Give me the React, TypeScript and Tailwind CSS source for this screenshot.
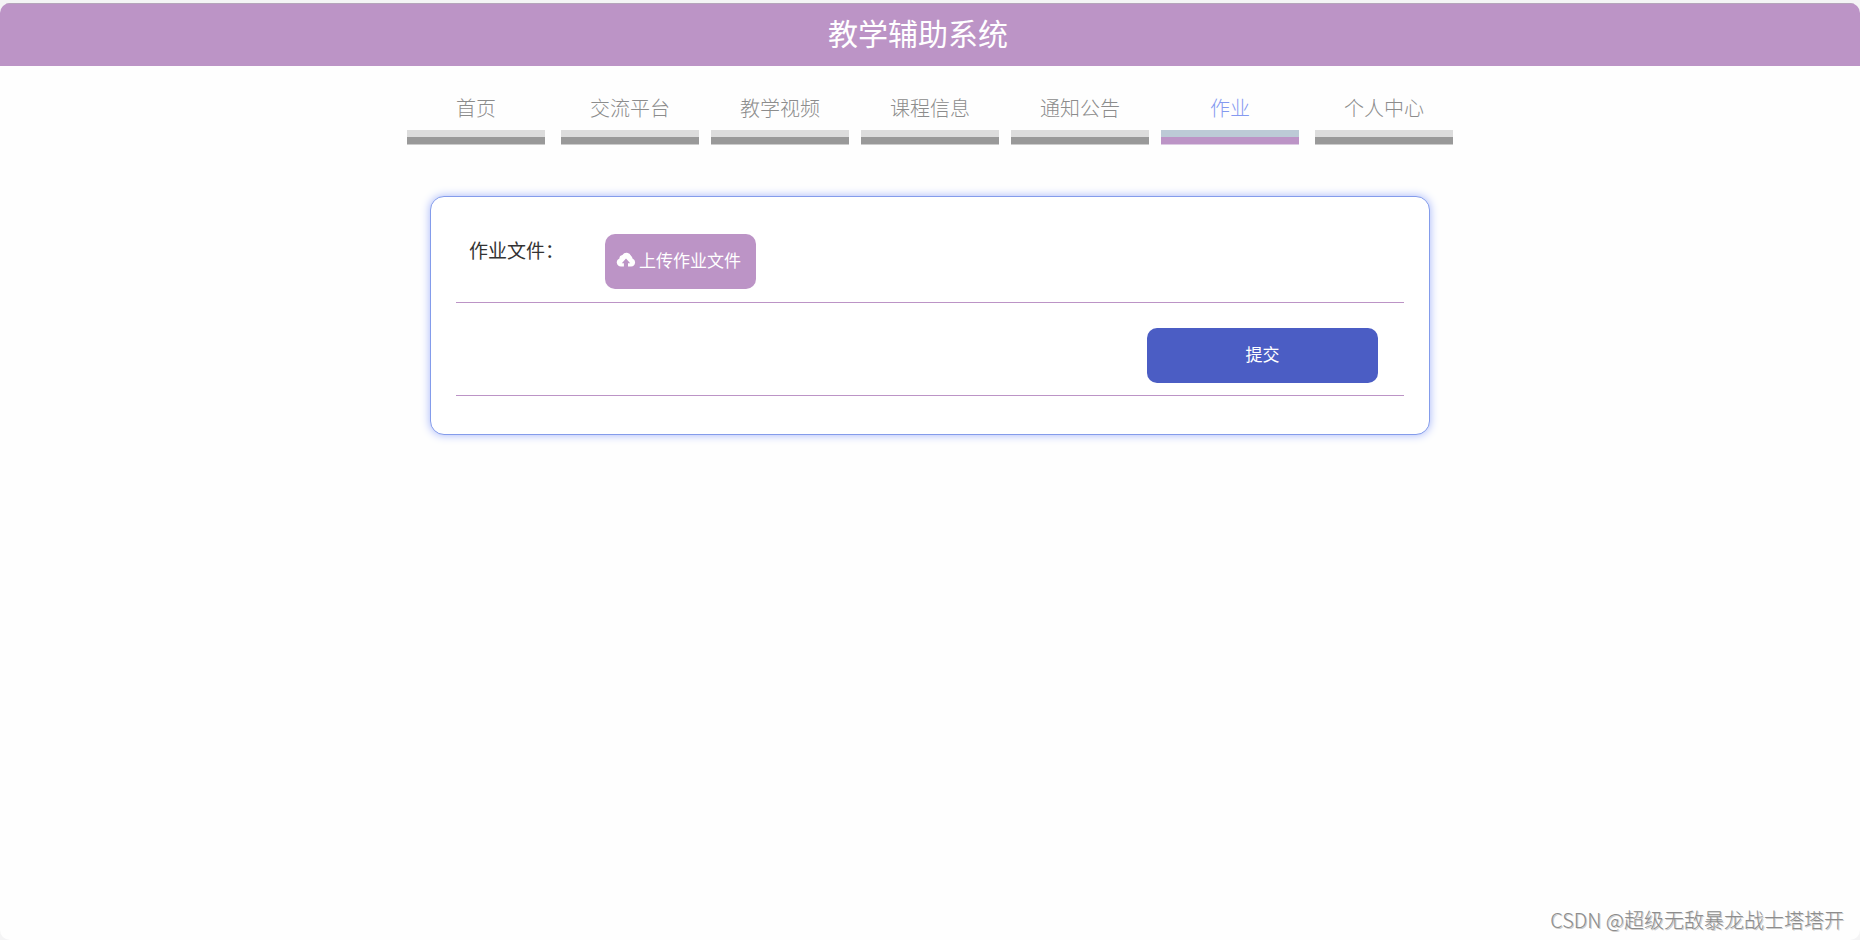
import { useRef } from "react";

type Tab = { label: string; active?: boolean; className?: string };

const tabs: Tab[] = [
  { label: "首页", className: "mr-1" },
  { label: "交流平台" },
  { label: "教学视频" },
  { label: "课程信息" },
  { label: "通知公告" },
  { label: "作业", active: true },
  { label: "个人中心", className: "ml-1" },
];

function CloudUploadIcon() {
  return (
    <svg viewBox="0 0 20 16" className="h-4 w-5" fill="currentColor" aria-hidden="true">
      <path d="M7.9 14.5H5A4.2 4.2 0 0 1 3.4 6.4A3.6 3.6 0 0 1 6.4 3.1A4.9 4.9 0 0 1 15.1 4Q16.3 4.7 16.5 6.6A4.1 4.1 0 0 1 15.2 14.5H12V11.2H14.2L10 6.4L5.8 11.2H7.9V14.5Z" />
    </svg>
  );
}

function NavTab({ label, active, className = "" }: Tab) {
  return (
    <li className={`w-[138px] ${className}`}>
      <a
        href="#"
        aria-current={active ? "page" : undefined}
        className={`block text-center text-xl leading-[44px] font-light ${active ? "text-[#8499f0]" : "text-[#8c8c8c]"}`}
      >
        {label}
        <span className={`block h-[7px] ${active ? "bg-[#bccad6]" : "bg-[#dcdcdc]"}`} />
        <span
          className={`block h-2 border-b ${active ? "border-[#dccbe2] bg-[#bc94c6]" : "border-[#cccccc] bg-[#999999]"}`}
        />
      </a>
    </li>
  );
}

export default function App() {
  const fileInput = useRef<HTMLInputElement>(null);
  return (
    <div className="flex min-h-screen flex-col bg-[#f4f4f5] pt-[3px] font-['Noto_Sans_CJK_SC',sans-serif]">
      <div className="flex grow flex-col overflow-hidden rounded-[10px] bg-[#fefefe]">
        <header className="border-t border-[#b5a5ba] bg-[#bc94c6] pr-6 pb-[6px] text-center text-white">
          <h1 className="text-[30px] leading-[56px] font-normal">教学辅助系统</h1>
        </header>

        <nav className="pt-5">
          <ul className="flex justify-center gap-3">
            {tabs.map((tab) => (
              <NavTab key={tab.label} {...tab} />
            ))}
          </ul>
        </nav>

        <main className="grow px-6 pt-[51px]">
          <form
            onSubmit={(e) => e.preventDefault()}
            className="mx-auto max-w-[1000px] rounded-[14px] border border-[#849ceb] bg-white px-[25px] pt-[25px] pb-[38px] shadow-[0_0_10px_#a5b6fa]"
          >
            <div className="flex items-start border-b border-[#bc94c6] pt-3 pb-[13px]">
              <label htmlFor="homework-file" className="w-[149px] pl-[13px] text-[19px] leading-8 text-[#333333]">
                作业文件：
              </label>
              <input ref={fileInput} id="homework-file" type="file" className="hidden" />
              <button
                type="button"
                onClick={() => fileInput.current?.click()}
                className="flex h-[55px] w-[151px] items-center gap-[3px] rounded-[10px] bg-[#bc94c6] pb-1 pl-[11px] text-[17px] text-white"
              >
                <CloudUploadIcon />
                上传作业文件
              </button>
            </div>
            <div className="flex justify-end border-b border-[#bc94c6] pt-[25px] pr-[26px] pb-3">
              <button
                type="submit"
                className="h-[55px] w-[231px] rounded-[10px] bg-[#4b5dc4] pb-1 text-[17px] text-white"
              >
                提交
              </button>
            </div>
          </form>
        </main>

        <footer className="px-4 pb-1 text-right text-xl leading-8 font-light text-[#8c8c8c] [text-shadow:1px_1px_0_#cccccc]">
          CSDN @超级无敌暴龙战士塔塔开
        </footer>
      </div>
    </div>
  );
}
